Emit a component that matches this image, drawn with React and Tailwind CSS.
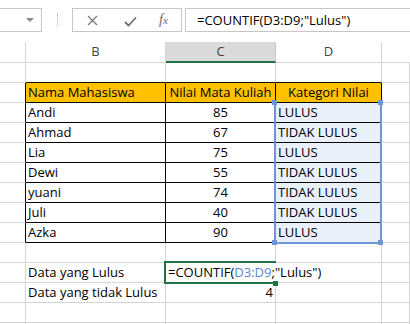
const GRID = 'border-r border-b border-r-[#d4d4d4] border-b-[#d4d4d4]';
const TBL = 'border-r border-b border-r-black border-b-black';

const data = [
  ['Andi', 85, 'LULUS'],
  ['Ahmad', 67, 'TIDAK LULUS'],
  ['Lia', 75, 'LULUS'],
  ['Dewi', 55, 'TIDAK LULUS'],
  ['yuani', 74, 'TIDAK LULUS'],
  ['Juli', 40, 'TIDAK LULUS'],
  ['Azka', 90, 'LULUS'],
];

const Cell = ({ className = '', children }) => (
  <div className={`h-5 text-[13px] leading-[19px] whitespace-nowrap overflow-hidden text-black ${className}`}>
    {children}
  </div>
);

const EmptyRow = () => (
  <>
    <Cell className={GRID} />
    <Cell className={GRID} />
    <Cell className={GRID} />
    <Cell className={GRID} />
    <Cell className={GRID} />
  </>
);

export default function App() {
  return (
    <div
      className="w-[410px] h-[324px] overflow-hidden bg-white"
      style={{ fontFamily: '"Open Sans", "Noto Sans", sans-serif' }}
    >
      {/* FORMULA BAR */}
      <div className="h-[42px] flex items-start pt-2">
        <div className="w-[43px] h-6 ml-[-1px] border border-[#c6c6c6] flex items-center justify-end pr-[7px]">
          <div className="w-0 h-0 border-l-[4px] border-r-[4px] border-t-[4px] border-l-transparent border-r-transparent border-t-[#8a8a8a]" />
        </div>
        <div className="ml-[15px] mt-[6px] h-[12px] border-l border-dotted border-[#b0b0b0]" />
        <div className="ml-[14px] w-[110px] h-6 border border-[#c6c6c6] flex items-center">
          <svg className="ml-[14px]" width="11" height="11" viewBox="0 0 11 11">
            <path d="M1 1L10 10M10 1L1 10" stroke="#7a7a7a" strokeWidth="1.3" fill="none" />
          </svg>
          <svg className="ml-[26px] mt-[2px]" width="13" height="11" viewBox="0 0 13 11">
            <path d="M1 6L4.5 9.5L12 1.5" stroke="#707070" strokeWidth="1.8" fill="none" />
          </svg>
          <span
            className="ml-[22px] text-[14px] italic text-[#6a6a6a] leading-none"
            style={{ fontFamily: '"Liberation Serif", serif' }}
          >
            f<span className="text-[11px]">x</span>
          </span>
        </div>
        <div className="ml-[3px] flex-1 mr-[-2px] h-6 border border-[#c6c6c6] pl-[11px] text-[13px] leading-[22px] text-black whitespace-nowrap">
          =COUNTIF(D3:D9;"Lulus")
        </div>
      </div>

      {/* SHEET */}
      <div className="relative grid grid-cols-[26px_140px_110px_106px_1fr]">
        {/* column headers */}
        <div className="h-[21px] border-r border-b border-[#d4d4d4]" />
        <div className="h-[21px] border-r border-b border-[#d4d4d4] text-center text-[13px] leading-[19px] text-[#444]">B</div>
        <div className="h-[21px] border-r border-r-[#c6c6c6] border-b-2 border-b-[#217346] bg-[#dadada] text-center text-[13px] leading-[19px] text-[#444]">C</div>
        <div className="h-[21px] border-r border-b border-[#d4d4d4] text-center text-[13px] leading-[19px] text-[#444]">D</div>
        <div className="h-[21px] border-b border-[#d4d4d4]" />

        {/* row 1 */}
        <Cell className={GRID} />
        <Cell className="border-r border-b border-r-[#d4d4d4] border-b-black" />
        <Cell className="border-r border-b border-r-[#d4d4d4] border-b-black" />
        <Cell className="border-r border-b border-r-[#d4d4d4] border-b-black" />
        <Cell className={GRID} />

        {/* row 2: table header */}
        <Cell className="border-r border-b border-r-black border-b-[#d4d4d4]" />
        <Cell className={`${TBL} bg-[#ffc000] pl-[2px]`}>Nama Mahasiswa</Cell>
        <Cell className={`${TBL} bg-[#ffc000] text-center`}>Nilai Mata Kuliah</Cell>
        <Cell className={`${TBL} bg-[#ffc000] text-center`}>Kategori Nilai</Cell>
        <Cell className={GRID} />

        {/* rows 3-9 */}
        {data.map(([name, score, cat]) => (
          <div key={name} className="contents">
            <Cell className="border-r border-b border-r-black border-b-[#d4d4d4]" />
            <Cell className={`${TBL} pl-[2px]`}>{name}</Cell>
            <Cell className={`${TBL} text-center`}>{score}</Cell>
            <Cell className={`${TBL} bg-[#eaf0fa] pl-[2px]`}>{cat}</Cell>
            <Cell className={GRID} />
          </div>
        ))}

        {/* row 10 */}
        <EmptyRow />

        {/* row 11 */}
        <Cell className={GRID} />
        <Cell className={`${GRID} pl-[2px]`}>Data yang Lulus</Cell>
        <div className="h-5 border-b border-b-[#d4d4d4] text-[13px] leading-[19px] whitespace-nowrap pl-[2px] text-black relative z-10">
          =COUNTIF(<span className="text-[#5a87d6]">D3:D9</span>;"Lulus")
        </div>
        <Cell className={GRID} />
        <Cell className={GRID} />

        {/* row 12 */}
        <Cell className={GRID} />
        <Cell className={`${GRID} pl-[2px]`}>Data yang tidak Lulus</Cell>
        <Cell className={`${GRID} text-right pr-[2px]`}>4</Cell>
        <Cell className={GRID} />
        <Cell className={GRID} />

        <EmptyRow />
        <EmptyRow />

        {/* range reference D3:D9 */}
        <div className="absolute left-[274px] top-[61px] w-[108px] h-[141px] border-l-2 border-r-2 border-b-2 border-[#6e95d6] pointer-events-none z-20" />
        <div className="absolute left-[272px] top-[58px] w-[5px] h-[5px] bg-[#6e95d6] z-20" />
        <div className="absolute left-[378px] top-[58px] w-[5px] h-[5px] bg-[#6e95d6] z-20" />
        <div className="absolute left-[272px] top-[198px] w-[5px] h-[5px] bg-[#6e95d6] z-20" />
        <div className="absolute left-[378px] top-[198px] w-[5px] h-[5px] bg-[#6e95d6] z-20" />

        {/* active cell C11 */}
        <div className="absolute left-[164px] top-[219px] w-[112px] h-[23px] border-l-2 border-t-2 border-b-2 border-[#217346] z-20" />
        <div className="absolute left-[273px] top-[239px] w-[5px] h-[5px] bg-[#217346] z-20" />
      </div>
    </div>
  );
}
